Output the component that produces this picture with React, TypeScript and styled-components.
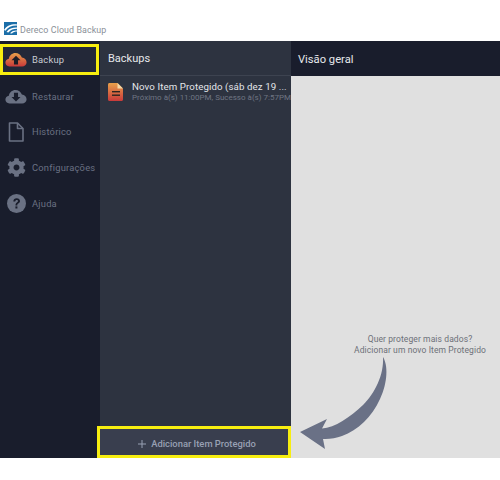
import React from "react";
import styled, { createGlobalStyle } from "styled-components";

const Global = createGlobalStyle`
  html, body { margin: 0; padding: 0; background: #fff; }
  * { box-sizing: border-box; }
`;

const Page = styled.div`
  width: 500px;
  height: 480px;
  display: flex;
  flex-direction: column;
  background: #fff;
  font-family: "Roboto", "Noto Sans", sans-serif;
  overflow: hidden;
`;

const TitleBar = styled.header`
  height: 41px;
  padding: 22px 0 0 4px;
  display: flex;
  align-items: flex-start;
  gap: 3px;
  font-size: 8.9px;
  line-height: 16px;
  color: #8a9098;
  letter-spacing: 0.1px;
`;

const Main = styled.main`
  height: 417px;
  display: flex;
`;

const Sidebar = styled.nav`
  width: 100px;
  flex: none;
  padding-top: 1px;
  background: #191d2c;
  display: flex;
  flex-direction: column;
`;

const NavItem = styled.div<{ $selected?: boolean }>`
  height: ${(p) => (p.$selected ? "31px" : "35.7px")};
  margin: ${(p) => (p.$selected ? "2px 1px 3.2px 0" : "0")};
  padding: ${(p) => (p.$selected ? "0 0 0 2px" : "0 0 0 5px")};
  border: ${(p) => (p.$selected ? "3px solid #f7ee10" : "0")};
  background: ${(p) => (p.$selected ? "#232838" : "transparent")};
  color: ${(p) => (p.$selected ? "#c9ccd3" : "#6a7183")};
  display: flex;
  align-items: center;
  gap: 5px;
  font-size: 9.4px;
  letter-spacing: 0.2px;
  white-space: nowrap;
`;

const IconSlot = styled.span`
  width: 22px;
  flex: none;
  display: flex;
  justify-content: center;
`;

const ListPanel = styled.section`
  width: 191px;
  flex: none;
  background: #2d3340;
  display: flex;
  flex-direction: column;
`;

const PanelHeader = styled.h2`
  height: 35px;
  margin: 0;
  padding: 1px 8px 0;
  display: flex;
  align-items: center;
  font-size: 11px;
  font-weight: 400;
  color: #e6e8eb;
  border-bottom: 1px solid #3d4350;
`;

const ListRow = styled.div`
  height: 34px;
  padding: 0 0 3px 8px;
  display: flex;
  align-items: center;
  gap: 9px;
  overflow: hidden;
`;

const RowText = styled.div`
  flex: 1;
  min-width: 0;
  white-space: nowrap;
`;

const RowTitle = styled.div`
  font-size: 9.7px;
  line-height: 13px;
  letter-spacing: 0.1px;
  color: #e4e6ea;
`;

const RowMeta = styled.div`
  font-size: 8px;
  line-height: 10px;
  color: #6f7583;
`;

const Spacer = styled.div`
  flex: 1;
`;

const AddButton = styled.button`
  height: 32px;
  width: 194px;
  margin-left: -3px;
  border: 3px solid #f7ee10;
  background: #393e4e;
  color: #98a0b3;
  display: flex;
  align-items: center;
  justify-content: center;
  gap: 5px;
  font-family: inherit;
  font-size: 9.4px;
  font-weight: 500;
  padding: 3px 0 0 6px;
`;

const OverviewPanel = styled.section`
  flex: 1;
  display: flex;
  flex-direction: column;
  background: #e0e0e0;
`;

const OverviewHeader = styled.h2`
  height: 35px;
  margin: 0;
  padding: 1px 7px 0;
  display: flex;
  align-items: center;
  font-size: 11.2px;
  font-weight: 400;
  color: #e6e8eb;
  background: #191d2c;
`;

const Hint = styled.div`
  margin: auto 0 0;
  padding: 0 0 103px 62px;
  text-align: center;
  font-size: 8.5px;
  line-height: 10.5px;
  letter-spacing: 0.1px;
  color: #6d7078;
  width: 196px;
  flex: none;
  position: relative;
  white-space: nowrap;
`;

const Arrow = styled.svg`
  position: absolute;
  left: 5px;
  bottom: 3px;
`;

const Footer = styled.div`
  flex: 1;
  background: #fff;
`;

const Logo = () => (
  <svg width="13" height="13" viewBox="0 0 13 13">
    <rect width="13" height="13" fill="#1b6ea8" />
    <path d="M0 8C3 3 8 2 13 2.4V3.6C8 3.4 4 5 1.4 8.8ZM2.5 10C5 6.4 9 5.4 13 5.6V6.8C9.6 6.8 6.6 7.8 4.4 10.4ZM6 11.2C8 9 10.5 8.4 13 8.6V9.6C11 9.6 9.2 10.2 8 11.6Z" fill="#fff" />
  </svg>
);

const CloudPath = "M5.5 18C2.5 18 0.5 15.8 0.5 13.2C0.5 10.7 2.3 8.8 4.7 8.5C5.5 4.3 8.8 1.5 12.7 1.5C16.5 1.5 19.5 3.8 20.7 7C24 7.2 26.5 9.6 26.5 12.8C26.5 15.9 24 18 21 18Z";

const UploadCloud = () => (
  <svg width="24" height="17" viewBox="0 0 27 19">
    <defs>
      <linearGradient id="cloudGrad" x1="0" y1="0" x2="0" y2="1">
        <stop offset="0" stopColor="#e8a04a" />
        <stop offset="1" stopColor="#c93a3a" />
      </linearGradient>
    </defs>
    <path d={CloudPath} fill="url(#cloudGrad)" />
    <path d="M13.5 5L19 10.5H16V15.5H11V10.5H8Z" fill="#1c1d26" />
  </svg>
);

const DownloadCloud = () => (
  <svg width="24" height="17" viewBox="0 0 27 19">
    <path d={CloudPath} fill="#6a7183" />
    <path d="M11 5H16V10H19L13.5 15.5L8 10H11Z" fill="#191d2c" />
  </svg>
);

const FileIcon = () => (
  <svg width="16" height="20" viewBox="0 0 16 20" fill="none" stroke="#6a7183" strokeWidth="1.6" strokeLinejoin="round">
    <path d="M1.5 1H9.5L15 6.5V19H1.5Z" />
    <path d="M9.5 1V6.5H15" />
  </svg>
);

const GearIcon = () => (
  <svg width="19" height="19" viewBox="0 0 512 512">
    <path fill="#6a7183" d="M487.4 315.7l-42.6-24.6c4.3-23.2 4.3-47 0-70.2l42.6-24.6c4.9-2.8 7.1-8.6 5.5-14-11.1-35.6-30-67.8-54.7-94.6-3.8-4.1-10-5.1-14.8-2.3L380.8 110c-17.9-15.4-38.5-27.3-60.8-35.1V25.8c0-5.6-3.9-10.5-9.4-11.7-36.7-8.2-74.3-7.8-109.2 0-5.5 1.2-9.4 6.1-9.4 11.7V75c-22.2 7.9-42.8 19.8-60.8 35.1L88.7 85.5c-4.9-2.8-11-1.9-14.8 2.3-24.7 26.7-43.6 58.9-54.7 94.6-1.7 5.4.6 11.2 5.5 14L67.3 221c-4.3 23.2-4.3 47 0 70.2l-42.6 24.6c-4.9 2.8-7.1 8.6-5.5 14 11.1 35.6 30 67.8 54.7 94.6 3.8 4.1 10 5.1 14.8 2.3l42.6-24.6c17.9 15.4 38.5 27.3 60.8 35.1v49.2c0 5.6 3.9 10.5 9.4 11.7 36.7 8.2 74.3 7.8 109.2 0 5.5-1.2 9.4-6.1 9.4-11.7v-49.2c22.2-7.9 42.8-19.8 60.8-35.1l42.6 24.6c4.9 2.8 11 1.9 14.8-2.3 24.7-26.7 43.6-58.9 54.7-94.6 1.5-5.5-.7-11.3-5.6-14.1zM256 336c-44.1 0-80-35.9-80-80s35.9-80 80-80 80 35.9 80 80-35.9 80-80 80z" />
  </svg>
);

const HelpIcon = () => (
  <svg width="19" height="19" viewBox="0 0 19 19">
    <circle cx="9.5" cy="9.5" r="9.5" fill="#6a7183" />
    <path d="M6.3 7.4C6.4 5.4 7.8 4.2 9.7 4.2C11.6 4.2 13 5.4 13 7C13 8.2 12.3 8.9 11.3 9.6C10.5 10.1 10.3 10.5 10.3 11.4H8.5C8.5 10 8.9 9.3 9.9 8.6C10.7 8 11 7.6 11 7.1C11 6.4 10.5 5.9 9.7 5.9C8.9 5.9 8.3 6.5 8.2 7.4Z" fill="#191d2c" />
    <rect x="8.4" y="12.4" width="2" height="2.1" fill="#191d2c" />
  </svg>
);

const ItemIcon = () => (
  <svg width="15" height="18" viewBox="0 0 15 18">
    <defs>
      <linearGradient id="docGrad" x1="0" y1="0" x2="0" y2="1">
        <stop offset="0" stopColor="#e8a04a" />
        <stop offset="1" stopColor="#c93a3a" />
      </linearGradient>
    </defs>
    <path d="M1.5 0H9.5L15 5.5V16.5C15 17.4 14.4 18 13.5 18H1.5C.6 18 0 17.4 0 16.5V1.5C0 .6 .6 0 1.5 0Z" fill="url(#docGrad)" />
    <path d="M9.5 0L15 5.5H9.5Z" fill="#f6d9a6" />
    <rect x="4" y="8" width="8" height="1.4" fill="#2b2420" />
    <rect x="4" y="11.5" width="8" height="1.4" fill="#2b2420" />
  </svg>
);

const PlusIcon = () => (
  <svg width="8" height="8" viewBox="0 0 8 8">
    <path d="M4 0V8M0 4H8" stroke="#98a0b3" strokeWidth="1" />
  </svg>
);

export default function App() {
  return (
    <Page>
      <Global />
      <TitleBar>
        <Logo />
        <span>Dereco Cloud Backup</span>
      </TitleBar>
      <Main>
        <Sidebar>
          <NavItem $selected>
            <IconSlot><UploadCloud /></IconSlot>
            Backup
          </NavItem>
          <NavItem>
            <IconSlot><DownloadCloud /></IconSlot>
            Restaurar
          </NavItem>
          <NavItem>
            <IconSlot><FileIcon /></IconSlot>
            Histórico
          </NavItem>
          <NavItem>
            <IconSlot><GearIcon /></IconSlot>
            Configurações
          </NavItem>
          <NavItem>
            <IconSlot><HelpIcon /></IconSlot>
            Ajuda
          </NavItem>
        </Sidebar>
        <ListPanel>
          <PanelHeader>Backups</PanelHeader>
          <ListRow>
            <ItemIcon />
            <RowText>
              <RowTitle>Novo Item Protegido (sáb dez 19 ...</RowTitle>
              <RowMeta>Próximo à(s) 11:00PM, Sucesso à(s) 7:57PM</RowMeta>
            </RowText>
          </ListRow>
          <Spacer />
          <AddButton>
            <PlusIcon />
            Adicionar Item Protegido
          </AddButton>
        </ListPanel>
        <OverviewPanel>
          <OverviewHeader>Visão geral</OverviewHeader>
          <Hint>
            Quer proteger mais dados?
            <br />
            Adicionar um novo Item Protegido
            <Arrow width="92" height="98" viewBox="296 360 92 98">
              <path
                fill="#6a7186"
                d="M383 360C388 368 388 385 380 402C372 420 358 433 342 439C336 441 329 442.5 323 442L325 452L300 435L327 422L322 431.5C335 431 350 420 363 408C375 396 384 378 383 360Z"
              />
            </Arrow>
          </Hint>
        </OverviewPanel>
      </Main>
      <Footer />
    </Page>
  );
}
